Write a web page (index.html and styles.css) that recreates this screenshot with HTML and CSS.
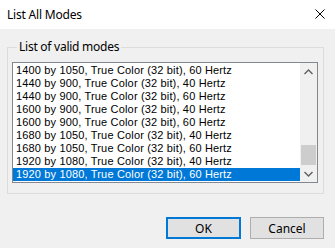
FILE: index.html
```html
<!DOCTYPE html>
<html lang="en">
<head>
  <meta charset="UTF-8" />
  <title>List All Modes</title>
  <link rel="stylesheet" href="styles.css">
</head>
<body>
  <div class="dialog">
    <div class="titlebar">
      <span class="title">List All Modes</span>
      <svg class="close" width="10" height="10" viewBox="0 0 10 10">
        <path d="M0.5 0.5 L9.5 9.5 M9.5 0.5 L0.5 9.5" stroke="#000" stroke-width="1" fill="none"/>
      </svg>
    </div>

    <div class="content">
      <fieldset class="modes">
        <legend>List of valid modes</legend>
        <div class="listbox">
          <ul class="rows">
            <li>1400 by 1050, True Color (32 bit), 60 Hertz</li>
            <li>1440 by 900, True Color (32 bit), 40 Hertz</li>
            <li>1440 by 900, True Color (32 bit), 60 Hertz</li>
            <li>1600 by 900, True Color (32 bit), 40 Hertz</li>
            <li>1600 by 900, True Color (32 bit), 60 Hertz</li>
            <li>1680 by 1050, True Color (32 bit), 40 Hertz</li>
            <li>1680 by 1050, True Color (32 bit), 60 Hertz</li>
            <li>1920 by 1080, True Color (32 bit), 40 Hertz</li>
            <li class="selected">1920 by 1080, True Color (32 bit), 60 Hertz</li>
          </ul>
          <div class="scrollbar">
            <div class="arrow">
              <svg width="9" height="6" viewBox="0 0 9 6"><path d="M0.5 5 L4.5 1 L8.5 5" stroke="#606060" stroke-width="1.4" fill="none"/></svg>
            </div>
            <div class="track"><div class="thumb"></div></div>
            <div class="arrow">
              <svg width="9" height="6" viewBox="0 0 9 6"><path d="M0.5 1 L4.5 5 L8.5 1" stroke="#606060" stroke-width="1.4" fill="none"/></svg>
            </div>
          </div>
        </div>
      </fieldset>

      <div class="buttons">
        <button class="btn default">OK</button>
        <button class="btn">Cancel</button>
      </div>
    </div>
  </div>
</body>
</html>
```

FILE: styles.css
```css
html, body {
  margin: 0;
  padding: 0;
}
body {
  width: 335px;
  height: 248px;
  background: #f0f0f0;
  font-family: "Liberation Sans", Arial, sans-serif;
  overflow: hidden;
}
.dialog {
  display: flex;
  flex-direction: column;
  height: 248px;
}
.titlebar {
  height: 29px;
  background: #fff;
  display: flex;
  align-items: center;
  justify-content: space-between;
  padding: 0 10px 0 7px;
}
.title {
  font-family: "Noto Sans", sans-serif;
  font-size: 12px;
  letter-spacing: -0.2px;
  color: #000;
}
.close {
  display: block;
  margin-top: -1px;
}
.content {
  display: flex;
  flex-direction: column;
}
.modes {
  margin: 10px 11px 0 7px;
  padding: 7px 5px 10px 4px;
  border: 1px solid #dcdcdc;
  min-width: 0;
}
.modes legend {
  font-family: "Noto Sans", sans-serif;
  font-size: 12px;
  letter-spacing: -0.25px;
  line-height: 16px;
  padding: 0 2px;
  margin-left: 5px;
  color: #000;
}
.listbox {
  display: flex;
  height: 119px;
  border: 1px solid #828790;
  background: #fff;
}
.rows {
  list-style: none;
  margin: 0;
  padding: 1px 0 0 0;
  flex: 1;
  font-size: 11px;
  letter-spacing: 0.16px;
  line-height: 13px;
}
.rows li {
  height: 13px;
  padding-left: 3px;
  white-space: nowrap;
  color: #000;
}
.rows li.selected {
  background: #0078d7;
  color: #fff;
}
.scrollbar {
  width: 17px;
  background: #f0f0f0;
  display: flex;
  flex-direction: column;
}
.arrow {
  height: 17px;
  display: flex;
  align-items: center;
  justify-content: center;
}
.track {
  flex: 1;
  display: flex;
  flex-direction: column;
  justify-content: flex-end;
  align-items: center;
}
.thumb {
  width: 15px;
  height: 20px;
  background: #cdcdcd;
}
.buttons {
  display: flex;
  justify-content: flex-end;
  gap: 9px;
  margin: 23px 11px 0 0;
}
.btn {
  width: 74px;
  height: 22px;
  background: #e1e1e1;
  border: 1px solid #adadad;
  font-family: "Noto Sans", sans-serif;
  font-size: 12px;
  color: #000;
  padding: 0;
}
.btn.default {
  width: 75px;
  border: 2px solid #0078d7;
}
```
